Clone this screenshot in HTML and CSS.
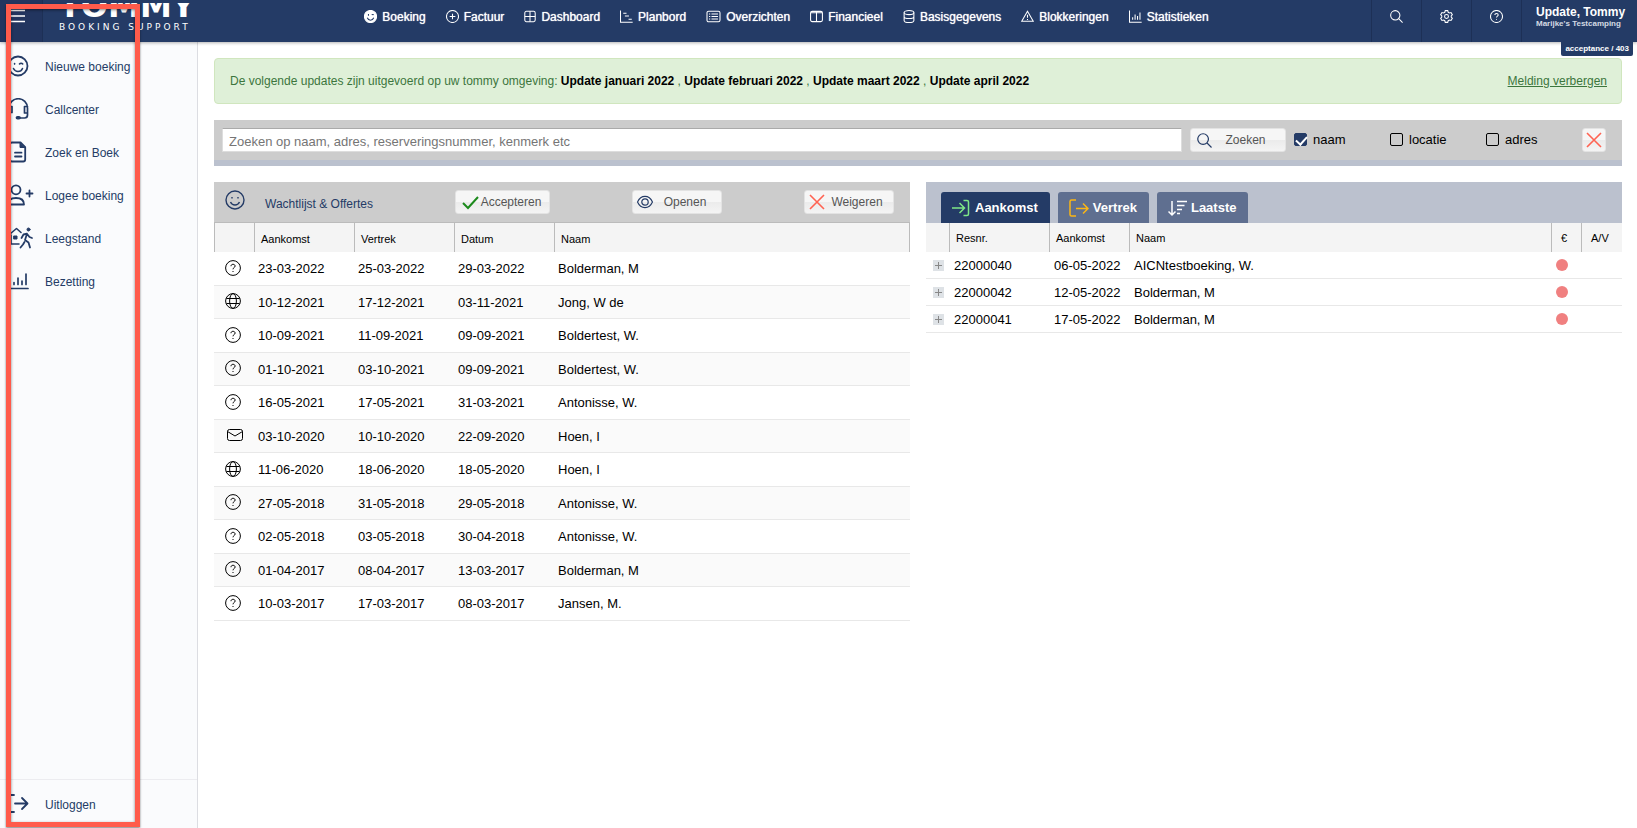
FILE: index.html
```html
<!DOCTYPE html>
<html lang="nl">
<head>
    <meta charset="UTF-8">
    <meta name="viewport" content="width=device-width, initial-scale=1.0">
    <title>Tommy Booking Support</title>
    <link rel="stylesheet" href="styles.css">
</head>
<body>

<!-- shared icons -->
<svg class="sprite" aria-hidden="true">
    <symbol id="i-question" viewBox="0 0 16 16">
        <circle cx="8" cy="8" r="7.4"/>
        <path d="M6 6.2C6 5 6.8 4.3 8 4.3s2.1.7 2.1 1.8C10.1 7.6 8 7.5 8 9.3"/>
        <path d="M8 11v1"/>
    </symbol>
    <symbol id="i-globe" viewBox="0 0 16 16">
        <circle cx="8" cy="8" r="7.4"/>
        <ellipse cx="8" cy="8" rx="3.4" ry="7.4"/>
        <path d="M1.4 5.500h13.200M1.400 10.500h13.200"/>
    </symbol>
    <symbol id="i-mail" viewBox="0 0 16 16">
        <rect x="0.5" y="2.5" width="15" height="11" rx="2"/>
        <path d="M.5 4.5 8 9l7.5-4.5"/>
    </symbol>
    <symbol id="i-cross" viewBox="0 0 16 16">
        <path stroke-width="1.6" d="M1 1l14 14M15 1 1 15"/>
    </symbol>
    <symbol id="i-search" viewBox="0 0 16 16">
        <g stroke-width="1.3">
            <circle cx="6.5" cy="6.5" r="5.7"/>
            <path d="M10.7 10.7 15.5 15.5"/>
        </g>
    </symbol>
</svg>

<header class="topbar">
    <button class="menu-btn" aria-label="Menu">
        <svg class="icon" width="16" height="16" viewBox="0 0 16 16"><path d="M0 2.5h16M0 8h16M0 13.5h16"/></svg>
    </button>
    <a class="logo" href="#">
        <span class="logo-name">TOMMY</span>
        <span class="logo-sub">BOOKING SUPPORT</span>
    </a>
    <nav class="main-nav">
        <a href="#">
            <svg class="icon" width="13" height="13" viewBox="0 0 16 16"><circle cx="8" cy="8" r="7.5" fill="#fff"/><path class="dark" d="M4 9.5c.8 2 2.2 3 4 3s3.2-1 4-3M9.5 6c.6-.7 1.9-.7 2.5 0M5.5 5v2"/></svg>
            Boeking
        </a>
        <a href="#">
            <svg class="icon" width="13" height="13" viewBox="0 0 16 16"><circle cx="8" cy="8" r="7.4"/><path d="M8 4.5v7M4.5 8h7"/></svg>
            Factuur
        </a>
        <a href="#">
            <svg class="icon" width="12" height="13" viewBox="0 0 15 16"><rect x="1" y="1.5" width="13" height="13" rx="2"/><path d="M7.5 1.5v13M1 8h13"/></svg>
            Dashboard
        </a>
        <a href="#">
            <svg class="icon" width="13" height="13" viewBox="0 0 16 16"><path d="M.6.5v14.5h15M4 4h4M6 7.5h5M10.5 11.3h4"/></svg>
            Planbord
        </a>
        <a href="#">
            <svg class="icon" width="15" height="13" viewBox="0 0 18 16"><rect x="1" y="1.5" width="16" height="13" rx="2"/><path d="M6.5 5h8M6.5 8h8M6.5 11h8M3.5 5H5M3.5 8H5M3.5 11H5"/></svg>
            Overzichten
        </a>
        <a href="#">
            <svg class="icon" width="13" height="13" viewBox="0 0 16 16"><rect x="0.7" y="1.7" width="14.6" height="12.6" rx="2"/><path d="M8 2v12M1 3.5h14"/></svg>
            Financieel
        </a>
        <a href="#">
            <svg class="icon" width="12" height="13" viewBox="0 0 14 16"><ellipse cx="7" cy="3.2" rx="6" ry="2.5"/><path d="M1 3.2v9.6c0 1.4 2.7 2.500 6 2.500s6-1.100 6-2.500V3.200M1 8c0 1.400 2.700 2.500 6 2.500s6-1.100 6-2.500"/></svg>
            Basisgegevens
        </a>
        <a href="#">
            <svg class="icon" width="13" height="13" viewBox="0 0 16 16"><path d="M8 1.5.9 13.800h14.200zM8 5.800v3.800M8 11v1.300"/></svg>
            Blokkeringen
        </a>
        <a href="#">
            <svg class="icon" width="13" height="13" viewBox="0 0 16 16"><path d="M.6.5v14.500h15M4.500 12V9M7.500 12V5.500M10.500 12V7.500M13.500 12V3"/></svg>
            Statistieken
        </a>
    </nav>
    <button class="tool-btn" aria-label="Zoeken">
        <svg class="icon" width="13" height="13"><use href="#i-search"/></svg>
    </button>
    <button class="tool-btn" aria-label="Instellingen">
        <svg class="icon" width="13" height="13" viewBox="0 0 16 16"><g stroke-width="1.3"><path d="M6.500.800h3l.6 2 1.500.8 2-.5 1.600 2.700L13.800 7.200v1.600l1.400 1.400-1.600 2.700-2-.5-1.500.8-.6 2h-3l-.6-2-1.500-.8-2 .5L.8 10.200l1.400-1.400V7.200L.8 5.800l1.600-2.700 2 .5 1.500-.8z"/><circle cx="8" cy="8" r="2.400"/></g></svg>
    </button>
    <button class="tool-btn" aria-label="Help">
        <svg class="icon" width="13" height="13"><use href="#i-question"/></svg>
    </button>
    <div class="user">
        <div class="user-name">Update, Tommy</div>
        <div class="user-site">Marijke's Testcamping</div>
        <div class="env-badge">acceptance / 403</div>
    </div>
</header>

<div class="page">
    <aside class="sidebar">
        <nav class="side-nav">
            <a href="#">
                <svg class="side-icon" viewBox="0 0 28 24"><circle cx="11" cy="11" r="9.500"/><path stroke-width="1.600" d="M6.500 13.500c1 2 2.500 3 4.500 3s3.700-1 4.500-3M12.500 9c.8-1 2.400-1 3.200 0M7.600 8.500v.6"/></svg>
                Nieuwe boeking
            </a>
            <a href="#">
                <svg class="side-icon" viewBox="0 0 28 24"><path stroke-width="1.700" d="M2 13V10a9 9 0 0 1 18.500 0v7c0 2-1 3-3 3H12M2 8.500h3v6H4c-1.300 0-2-.7-2-2zM20.500 8.500h-3v6.500h3"/><rect class="solid" x="9.500" y="19" width="3.500" height="1.500" rx="1"/></svg>
                Callcenter
            </a>
            <a href="#">
                <svg class="side-icon" viewBox="0 0 28 24"><path stroke-width="1.800" d="M5 1.500h8.500l4.700 4.700v12.300a2 2 0 0 1-2 2H5a2 2 0 0 1-2-2v-15a2 2 0 0 1 2-2zM8 11.700h6.500M8 15.500h6.500"/><path class="solid" stroke-width="1" d="M13 2v4.500h4.500z"/></svg>
                Zoek en Boek
            </a>
            <a href="#">
                <svg class="side-icon" viewBox="0 0 28 24"><path stroke-width="1.800" d="M1 20.500c0-4 3-6.500 8-6.500s8 2.500 8 6.500zM22.500 6.500v6M19.500 9.500h6"/><circle cx="9" cy="5.800" r="4.500"/></svg>
                Logee boeking
            </a>
            <a href="#">
                <svg class="side-icon" viewBox="0 0 28 24"><path stroke-width="1.600" d="M3 7l6.500-5.500L14 5.500M4 8v9h8"/><rect class="solid" stroke-width="1" x="7" y="9" width="3" height="3"/><circle class="solid" stroke-width="1" cx="21.500" cy="2.500" r="1.500"/><path stroke-width="1.800" d="M14.500 11l2-3.500 3.500-.8-2 6.300 3.500 2.500 1.500 5M17.500 15l-1.500 2.500-2.500 3M20.500 7.500l2 2.500 2.500 1"/></svg>
                Leegstand
            </a>
            <a href="#">
                <svg class="side-icon" viewBox="0 0 28 24"><path stroke-width="1.700" d="M1 18.500h20M7 14.500v-2M11 14.500V8M15 14.500v-3.500M19 14.500V4"/></svg>
                Bezetting
            </a>
        </nav>
        <nav class="side-foot">
            <a href="#">
                <svg class="side-icon" viewBox="0 0 28 24"><path stroke-width="1.800" d="M7 2H1v17h6M8 10.500h12M15 5l5.500 5.500L15 16"/></svg>
                Uitloggen
            </a>
        </nav>
    </aside>

    <main class="content">
        <div class="notice">
            <div>De volgende updates zijn uitgevoerd op uw tommy omgeving:
                <b>Update januari 2022</b> , <b>Update februari 2022</b> , <b>Update maart 2022</b> , <b>Update april 2022</b></div>
            <a href="#">Melding verbergen</a>
        </div>

        <form class="search">
            <input type="text" aria-label="Zoeken" placeholder="Zoeken op naam, adres, reserveringsnummer, kenmerk etc">
            <button type="button" class="btn btn-search">
                <svg class="icon navy" width="15" height="15"><use href="#i-search"/></svg>
                <span>Zoeken</span>
            </button>
            <label><input type="checkbox" checked> naam</label>
            <label><input type="checkbox"> locatie</label>
            <label><input type="checkbox"> adres</label>
            <button type="button" class="btn btn-clear" aria-label="Wissen">
                <svg class="icon red" width="16" height="16"><use href="#i-cross"/></svg>
            </button>
        </form>

        <div class="panels">
            <section class="panel">
                <div class="wait-head">
                    <h2>
                        <svg class="icon navy" width="20" height="20" viewBox="0 0 20 20"><g stroke-width="1.400"><circle cx="10" cy="10" r="9"/><path d="M5.500 12c.9 2 2.500 3 4.500 3s3.600-1 4.500-3M7 7v1.500M13 7v1.500"/></g></svg>
                        <span>Wachtlijst &amp; Offertes</span>
                    </h2>
                    <div class="actions">
                        <button class="btn btn-accept">
                            <svg class="icon green" width="17" height="16" viewBox="0 0 17 16"><path d="M1 9l5 5L16 3"/></svg>
                            <span>Accepteren</span>
                        </button>
                        <button class="btn btn-action">
                            <svg class="icon navy" width="16" height="16" viewBox="0 0 16 16"><g stroke-width="1.200"><path d="M.5 8C2.200 4.200 4.800 2.300 8 2.300s5.800 1.900 7.500 5.700c-1.700 3.800-4.300 5.700-7.500 5.700S2.200 11.800.5 8z"/><circle cx="8" cy="8" r="3.200"/></g></svg>
                            <span>Openen</span>
                        </button>
                        <button class="btn btn-action">
                            <svg class="icon red" width="16" height="16"><use href="#i-cross"/></svg>
                            <span>Weigeren</span>
                        </button>
                    </div>
                </div>
                <table class="wait-table">
                    <thead>
                        <tr>
                            <th class="col-icon"></th>
                            <th class="col-date">Aankomst</th>
                            <th class="col-date">Vertrek</th>
                            <th class="col-date">Datum</th>
                            <th>Naam</th>
                        </tr>
                    </thead>
                    <tbody>
                        <tr><td><svg class="icon"><use href="#i-question"/></svg></td><td>23-03-2022</td><td>25-03-2022</td><td>29-03-2022</td><td>Bolderman, M</td></tr>
                        <tr><td><svg class="icon"><use href="#i-globe"/></svg></td><td>10-12-2021</td><td>17-12-2021</td><td>03-11-2021</td><td>Jong, W de</td></tr>
                        <tr><td><svg class="icon"><use href="#i-question"/></svg></td><td>10-09-2021</td><td>11-09-2021</td><td>09-09-2021</td><td>Boldertest, W.</td></tr>
                        <tr><td><svg class="icon"><use href="#i-question"/></svg></td><td>01-10-2021</td><td>03-10-2021</td><td>09-09-2021</td><td>Boldertest, W.</td></tr>
                        <tr><td><svg class="icon"><use href="#i-question"/></svg></td><td>16-05-2021</td><td>17-05-2021</td><td>31-03-2021</td><td>Antonisse, W.</td></tr>
                        <tr><td><svg class="icon mail"><use href="#i-mail"/></svg></td><td>03-10-2020</td><td>10-10-2020</td><td>22-09-2020</td><td>Hoen, I</td></tr>
                        <tr><td><svg class="icon"><use href="#i-globe"/></svg></td><td>11-06-2020</td><td>18-06-2020</td><td>18-05-2020</td><td>Hoen, I</td></tr>
                        <tr><td><svg class="icon"><use href="#i-question"/></svg></td><td>27-05-2018</td><td>31-05-2018</td><td>29-05-2018</td><td>Antonisse, W.</td></tr>
                        <tr><td><svg class="icon"><use href="#i-question"/></svg></td><td>02-05-2018</td><td>03-05-2018</td><td>30-04-2018</td><td>Antonisse, W.</td></tr>
                        <tr><td><svg class="icon"><use href="#i-question"/></svg></td><td>01-04-2017</td><td>08-04-2017</td><td>13-03-2017</td><td>Bolderman, M</td></tr>
                        <tr><td><svg class="icon"><use href="#i-question"/></svg></td><td>10-03-2017</td><td>17-03-2017</td><td>08-03-2017</td><td>Jansen, M.</td></tr>
                    </tbody>
                </table>
            </section>

            <section class="panel">
                <div class="tabs">
                    <button class="tab active">
                        <svg class="icon lime" width="18" height="18" viewBox="0 0 18 18"><path d="M0 9h12M7.500 4l5 5-5 5M11.500 1.500H15a1.500 1.500 0 0 1 1.500 1.500v12a1.500 1.500 0 0 1-1.500 1.500h-3.500"/></svg>
                        Aankomst
                    </button>
                    <button class="tab tab-tight">
                        <svg class="icon amber" width="20" height="18" viewBox="0 0 20 18"><path d="M7 1H2.500A1.500 1.500 0 0 0 1 2.500v13A1.500 1.500 0 0 0 2.500 17H7M7 9.500h12M14 4.500l5 5-5 5"/></svg>
                        Vertrek
                    </button>
                    <button class="tab tab-tight">
                        <svg class="icon" width="19" height="18" viewBox="0 0 19 18"><path d="M4 2v14M.5 12.500 4 16l3.500-3.500M9 2.500h10M9 6.500h7.500M9 10.500h5M9 14.500h3"/></svg>
                        Laatste
                    </button>
                </div>
                <table class="res-table">
                    <thead>
                        <tr>
                            <th class="col-plus"></th>
                            <th class="col-nr">Resnr.</th>
                            <th class="col-arr">Aankomst</th>
                            <th>Naam</th>
                            <th class="col-euro">€</th>
                            <th class="col-av">A/V</th>
                        </tr>
                    </thead>
                    <tbody>
                        <tr><td><button class="plus" aria-label="Uitklappen"></button></td><td>22000040</td><td>06-05-2022</td><td>AICNtestboeking, W.</td><td><span class="dot"></span></td><td></td></tr>
                        <tr><td><button class="plus" aria-label="Uitklappen"></button></td><td>22000042</td><td>12-05-2022</td><td>Bolderman, M</td><td><span class="dot"></span></td><td></td></tr>
                        <tr><td><button class="plus" aria-label="Uitklappen"></button></td><td>22000041</td><td>17-05-2022</td><td>Bolderman, M</td><td><span class="dot"></span></td><td></td></tr>
                    </tbody>
                </table>
            </section>
        </div>
    </main>
</div>

<div class="highlight"></div>

</body>
</html>
```
FILE: styles.css
```css
* {
    box-sizing: border-box;
}
body {
    margin: 0;
    min-height: 100vh;
    display: flex;
    flex-direction: column;
    font-family: "Liberation Sans", Arial, sans-serif;
    font-size: 12px;
    color: #000;
    background: #fff;
}
a {
    color: inherit;
    text-decoration: none;
}
button, input {
    font-family: inherit;
}
button {
    border: 0;
    padding: 0;
    cursor: pointer;
}
.sprite {
    display: none;
}
.icon {
    flex: none;
    fill: none;
    stroke: currentColor;
    stroke-width: 1;
}
.navy {
    color: #243b66;
}
.red {
    color: #ff6352;
}
.green {
    color: #1c8a1c;
    stroke-width: 2;
}
.lime {
    color: #7ee787;
}
.amber {
    color: #fbb615;
}

/* top bar */
.topbar {
    display: flex;
    height: 42px;
    background: #243b66;
    color: #fff;
    box-shadow: 0 1px 3px rgba(0, 0, 0, 0.3);
    position: relative;
}
.menu-btn {
    width: 43px;
    padding: 0 0 10px 9px;
    text-align: left;
    background: #22355f;
    color: #fff;
    border-right: 1px solid #1d3056;
}
.menu-btn .icon {
    display: block;
    stroke-width: 1.5;
}
.logo {
    width: 159px;
    margin-top: 3px;
    padding: 0 0 10px 16px;
    overflow: hidden;
    display: flex;
    flex-direction: column;
    justify-content: flex-end;
    gap: 4px;
    font-family: "DejaVu Sans", sans-serif;
    white-space: nowrap;
}
.logo-name {
    font-size: 32px;
    line-height: 26px;
    font-weight: bold;
}
.logo-sub {
    font-size: 9px;
    line-height: 9px;
    letter-spacing: 3px;
}
.main-nav {
    flex: 1;
    display: flex;
    justify-content: center;
    align-items: center;
    gap: 20px;
    padding-bottom: 9px;
    text-shadow: 0 0 1px #fff;
}
.main-nav a {
    display: flex;
    align-items: center;
    gap: 5px;
}
.main-nav .icon {
    stroke-width: 1.3;
}
.main-nav .dark {
    stroke: #243b66;
}
.tool-btn {
    width: 50px;
    padding-bottom: 10px;
    background: none;
    color: #fff;
    border-left: 1px solid #1d3056;
}
.tool-btn .icon {
    vertical-align: middle;
    stroke-width: 1.3;
}
.user {
    width: 116px;
    padding: 5px 0 0 14px;
    border-left: 1px solid #1d3056;
    font-weight: bold;
    white-space: nowrap;
    position: relative;
}
.user-name {
    line-height: 14px;
}
.user-site {
    font-size: 8px;
    line-height: 9px;
    color: #d5dae4;
}
.env-badge {
    position: absolute;
    top: 42px;
    right: 4px;
    padding: 0 4px;
    font-size: 8px;
    line-height: 14px;
    background: #243b66;
    border-radius: 0 0 2px 2px;
}

/* sidebar */
.page {
    flex: 1;
    display: flex;
}
.sidebar {
    width: 198px;
    display: flex;
    flex-direction: column;
    justify-content: space-between;
    background: #fafbfd;
    border-right: 1px solid #dcdde2;
    color: #243b66;
}
.side-nav {
    padding-top: 3px;
}
.side-nav a, .side-foot a {
    display: flex;
    align-items: center;
    gap: 10px;
    height: 43px;
    padding-left: 7px;
}
.side-icon {
    width: 28px;
    height: 24px;
    flex: none;
    fill: none;
    stroke: currentColor;
    stroke-width: 1.8;
    stroke-linecap: round;
    stroke-linejoin: round;
}
.side-icon .solid {
    fill: currentColor;
}
.side-foot {
    padding: 3px 0 2px;
    border-top: 1px solid #ececf0;
}

/* content */
.content {
    flex: 1;
    padding: 16px 15px 16px 16px;
    display: flex;
    flex-direction: column;
    gap: 16px;
}
.notice {
    display: flex;
    justify-content: space-between;
    padding: 15px 14px 14px 15px;
    line-height: 15px;
    color: #3c763d;
    background: #dff0d8;
    border: 1px solid #d0e6be;
    border-radius: 4px;
}
.notice b {
    color: #000;
}
.notice a {
    text-decoration: underline;
}
.search {
    display: flex;
    align-items: center;
    gap: 8px;
    padding: 8px 16px 8px 8px;
    background: #ccc;
    border-bottom: 6px solid #bbc1ce;
    font-size: 13px;
}
.search input[type="text"] {
    flex: 1;
    height: 24px;
    padding: 2px 6px 0;
    font-size: 13px;
    background: #fff;
    border: 1px solid #ddd;
    border-top-color: #aaa;
}
.search input::placeholder {
    color: #757575;
}
.search label {
    width: 88px;
    display: flex;
    align-items: center;
    gap: 6px;
    padding-bottom: 2px;
}
.search input[type="checkbox"] {
    appearance: none;
    width: 13px;
    height: 13px;
    margin: 0;
    border: 1px solid #000;
    border-radius: 2px;
}
.search input[type="checkbox"]:checked {
    background: #243b66;
    border-color: #243b66;
}
.search input[type="checkbox"]:checked::after {
    content: "";
    display: block;
    width: 5px;
    height: 9px;
    margin: 0 0 0 3px;
    border: solid #fff;
    border-width: 0 2px 2px 0;
    transform: rotate(42deg);
}
.btn {
    display: flex;
    align-items: center;
    height: 24px;
    padding: 0 6px;
    font-size: 12px;
    color: #555;
    background: linear-gradient(#f6f6f6 50%, #ebebeb 50%, #f4f4f4);
    border: 1px solid #e3e3e3;
    border-radius: 3px;
}
.btn span {
    flex: 1;
}
.btn-search {
    width: 96px;
}
.btn-clear {
    width: 24px;
    padding: 0 3px;
}
.btn-accept {
    width: 95px;
}
.btn-action {
    width: 90px;
    padding: 0 4px;
}

/* panels */
.panels {
    display: flex;
    gap: 16px;
    align-items: flex-start;
}
.panel {
    flex: 1;
}
.wait-head {
    display: grid;
    grid-template-columns: 230px 1fr;
    padding: 8px 16px 8px 11px;
    background: #ccc;
}
.wait-head h2 {
    display: flex;
    align-items: flex-start;
    gap: 20px;
    margin: 0;
    font-size: 12px;
    font-weight: normal;
    color: #243b66;
}
.wait-head h2 span {
    padding-top: 7px;
}
.actions {
    display: flex;
    justify-content: space-between;
}
table {
    width: 100%;
    table-layout: fixed;
    border-spacing: 0;
    font-size: 13px;
}
th {
    height: 29px;
    padding: 0 0 0 6px;
    font-size: 11px;
    font-weight: normal;
    text-align: left;
    background: #f4f4f4;
    border-left: 1px solid #bbb;
}
td {
    padding: 0 0 0 4px;
    border-bottom: 1px solid #e8e8e8;
    white-space: nowrap;
}
td svg, td button, td span {
    display: block;
}
.wait-table th {
    height: 30px;
    padding-top: 3px;
    border-top: 1px solid #bbb;
}
.wait-table th:last-child {
    border-right: 1px solid #bbb;
}
.wait-table td {
    height: 34px;
}
.wait-table tr:nth-child(even) td {
    height: 33px;
    background: #fafafa;
}
.wait-table td:first-child {
    padding: 0 0 2px 11px;
}
.wait-table .icon {
    width: 16px;
    height: 16px;
}
.wait-table .mail {
    margin-left: 2px;
}
.col-icon {
    width: 40px;
}
.col-date, .col-nr {
    width: 100px;
}
.tabs {
    display: flex;
    gap: 8px;
    padding: 10px 15px 0;
    background: #bbc1ce;
}
.tab {
    display: flex;
    align-items: center;
    gap: 5px;
    height: 31px;
    padding: 0 12px 0 11px;
    font-size: 13px;
    font-weight: bold;
    color: #fff;
    background: #5f6f90;
    border-radius: 3px 3px 0 0;
}
.tab .icon {
    stroke-width: 1.5;
}
.tab.active {
    background: #243b66;
}
.tab-tight {
    gap: 4px;
}
.res-table th:first-child {
    border-left: 0;
}
.res-table td {
    height: 27px;
    padding-left: 5px;
}
.res-table td:first-child {
    padding-left: 7px;
}
.col-plus {
    width: 23px;
}
.col-arr {
    width: 80px;
}
.res-table .col-euro {
    width: 30px;
    padding-left: 9px;
}
.res-table .col-av {
    width: 41px;
    padding-left: 9px;
}
.plus {
    width: 11px;
    height: 11px;
    background:
        linear-gradient(#888, #888) center / 7px 1px no-repeat,
        linear-gradient(#888, #888) center / 1px 7px no-repeat,
        #dee2e6;
}
.dot {
    width: 12px;
    height: 12px;
    border-radius: 50%;
    background: #f08080;
}

/* frame drawn over the sidebar */
.highlight {
    position: fixed;
    top: 4px;
    left: 6px;
    bottom: 1px;
    width: 134px;
    border: 5px solid #ff5b4b;
    box-shadow: 0 1px 2px rgba(0, 0, 0, 0.5), inset 0 1px 3px rgba(0, 0, 0, 0.5);
    pointer-events: none;
}
```
